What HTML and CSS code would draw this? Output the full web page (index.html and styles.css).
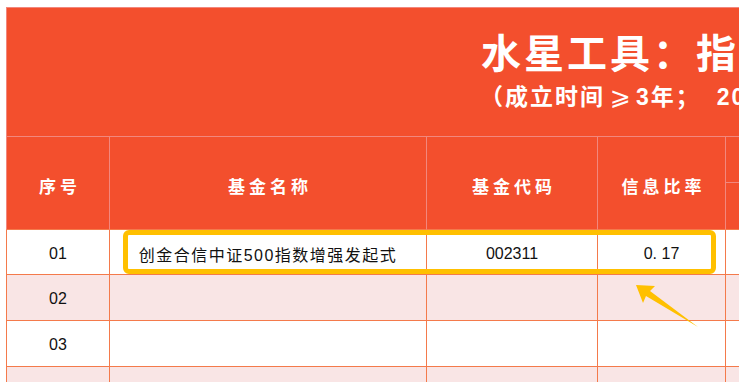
FILE: index.html
```html
<!DOCTYPE html>
<html lang="zh-CN">
<head>
<meta charset="utf-8">
<title>水星工具</title>
<link rel="stylesheet" href="styles.css">
</head>
<body>
<div class="page">
  <div class="sheet">
    <div class="title-row">
      <div class="title">水星工具：指数增强基金信息比率排行榜</div>
      <div class="subtitle">（成立时间<span class="ge">⩾</span>3年；<span class="semi-gap"></span>2023年数据）</div>
    </div>
    <div class="row head">
      <div class="cell c1">序号</div>
      <div class="cell c2">基金名称</div>
      <div class="cell c3">基金代码</div>
      <div class="cell c4">信息比率</div>
      <div class="cell c5 split">
        <div class="split-top"></div>
        <div class="split-bottom"></div>
      </div>
    </div>
    <div class="row body first">
      <div class="cell c1">01</div>
      <div class="cell c2 name">创金合信中证500指数增强发起式</div>
      <div class="cell c3">002311</div>
      <div class="cell c4">0. 17</div>
      <div class="cell c5"></div>
    </div>
    <div class="row body pink">
      <div class="cell c1">02</div>
      <div class="cell c2"></div>
      <div class="cell c3"></div>
      <div class="cell c4"></div>
      <div class="cell c5"></div>
    </div>
    <div class="row body">
      <div class="cell c1">03</div>
      <div class="cell c2"></div>
      <div class="cell c3"></div>
      <div class="cell c4"></div>
      <div class="cell c5"></div>
    </div>
    <div class="row body pink">
      <div class="cell c1"></div>
      <div class="cell c2"></div>
      <div class="cell c3"></div>
      <div class="cell c4"></div>
      <div class="cell c5"></div>
    </div>
  </div>
  <div class="highlight"></div>
  <svg class="arrow" width="75" height="50" viewBox="0 0 75 50">
    <polygon points="6,5 25,6 20,11 68,47 16,16 13,23" fill="#FFC000"/>
  </svg>
</div>
</body>
</html>
```

FILE: styles.css
```css
html, body {
  margin: 0;
  padding: 0;
  background: #ffffff;
}

body {
  width: 739px;
  height: 382px;
  overflow: hidden;
  font-family: "Liberation Sans", "Noto Sans CJK SC", sans-serif;
}

.page {
  position: relative;
  width: 739px;
  height: 382px;
  overflow: hidden;
  padding: 7px 0 0 6px;
  box-sizing: border-box;
}

.sheet {
  width: 1200px;
}

.title-row {
  height: 130px;
  box-sizing: border-box;
  background: #F34F2D;
  border: 1px solid #F2877D;
  color: #ffffff;
  font-weight: 700;
  white-space: nowrap;
  padding-left: 474px;
  padding-top: 24px;
}

.title {
  font-size: 40px;
  letter-spacing: 3px;
  line-height: 44px;
}

.subtitle {
  font-size: 23px;
  letter-spacing: 2px;
  line-height: 30px;
  margin-left: -1px;
  margin-top: 6px;
}

.ge {
  display: inline-block;
  width: 31px;
  text-align: center;
  font-family: "DejaVu Sans", "Noto Sans CJK SC", sans-serif;
  font-size: 25px;
  font-weight: 400;
  letter-spacing: 0;
}

.semi-gap {
  display: inline-block;
  width: 16px;
}

.row {
  display: flex;
}

.cell {
  box-sizing: border-box;
  display: flex;
  align-items: center;
  justify-content: center;
  border-right: 1px solid #F47A4B;
  border-bottom: 1px solid #F47A4B;
}

.c1 { width: 104px; border-left: 1px solid #F47A4B; }
.c2 { width: 317px; }
.c3 { width: 171px; }
.c4 { width: 128px; }
.c5 { flex: 1; }

.head .cell {
  height: 93px;
  background: #F34F2D;
  color: #ffffff;
  font-weight: 700;
  font-size: 17px;
  letter-spacing: 4px;
  border-right-color: #F2877D;
  padding-top: 4px;
  padding-left: 4px;
}

.head .c1 { border-left-color: #F2877D; }

.head .split {
  flex-direction: column;
  align-items: stretch;
  padding: 0;
}

.split-top {
  height: 45px;
  border-bottom: 1px solid #F2877D;
}

.split-bottom {
  flex: 1;
}

.body .cell {
  height: 46px;
  color: #111111;
  font-size: 16px;
  padding-top: 3px;
}

.body.first .cell {
  height: 45px;
}

.body.pink .cell {
  background: #F9E5E5;
}

.name {
  letter-spacing: 1.5px;
}

.highlight {
  position: absolute;
  left: 123px;
  top: 230px;
  width: 593px;
  height: 44px;
  box-sizing: border-box;
  border: 5px solid #FFC000;
  border-radius: 6px;
}

.arrow {
  position: absolute;
  left: 630px;
  top: 280px;
}
```
